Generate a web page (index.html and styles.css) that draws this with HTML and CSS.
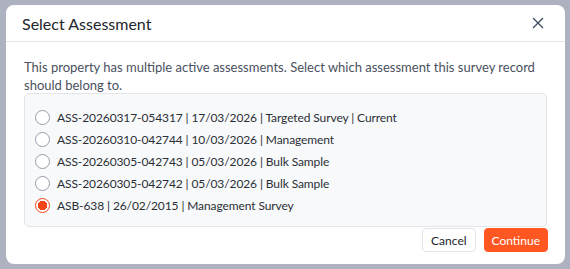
FILE: index.html
```html
<!DOCTYPE html>
<html lang="en">
<head>
    <meta charset="UTF-8">
    <meta name="viewport" content="width=device-width, initial-scale=1.0">
    <title>Select Assessment</title>
    <link rel="stylesheet" href="styles.css">
</head>
<body>
    <div class="dialog">
        <div class="dialog-header">
            <h2 class="dialog-title">Select Assessment</h2>
            <button class="close-btn" aria-label="Close">
                <svg width="12" height="12" viewBox="0 0 12 12">
                    <path d="M1 1 L11 11 M11 1 L1 11" stroke="#3b4a5c" stroke-width="1.3" fill="none"/>
                </svg>
            </button>
        </div>

        <div class="dialog-body">
            <p class="intro">This property has multiple active assessments. Select which assessment this survey record should belong to.</p>

            <div class="options">
                <label class="option">
                    <input type="radio" name="assessment">
                    <span>ASS-20260317-054317 | 17/03/2026 | Targeted Survey | Current</span>
                </label>
                <label class="option">
                    <input type="radio" name="assessment">
                    <span>ASS-20260310-042744 | 10/03/2026 | Management</span>
                </label>
                <label class="option">
                    <input type="radio" name="assessment">
                    <span>ASS-20260305-042743 | 05/03/2026 | Bulk Sample</span>
                </label>
                <label class="option">
                    <input type="radio" name="assessment">
                    <span>ASS-20260305-042742 | 05/03/2026 | Bulk Sample</span>
                </label>
                <label class="option">
                    <input type="radio" name="assessment" checked>
                    <span>ASB-638 | 26/02/2015 | Management Survey</span>
                </label>
            </div>
        </div>

        <div class="dialog-footer">
            <button class="btn btn-cancel">Cancel</button>
            <button class="btn btn-continue">Continue</button>
        </div>
    </div>
</body>
</html>
```

FILE: styles.css
```css
body {
    margin: 0;
    background-color: #aeb1c0;
    font-family: "Segoe UI", Lato, sans-serif;
    color: #2b2f36;
    padding: 5px 5px 5px 6px;
}

.dialog {
    background-color: white;
    border-radius: 8px;
    width: 559px;
    height: 259px;
    box-sizing: border-box;
    display: flex;
    flex-direction: column;
}

.dialog-header {
    display: flex;
    align-items: center;
    justify-content: space-between;
    height: 36px;
    padding: 0 21px 0 16px;
    border-bottom: 1px solid #e2e4ea;
}

.dialog-title {
    margin: 0;
    font-size: 16px;
    font-weight: 400;
    color: #22262c;
}

.close-btn {
    background: none;
    border: none;
    padding: 0;
    display: flex;
    cursor: pointer;
}

.dialog-body {
    padding: 16px 18px 0 18px;
}

.intro {
    margin: 0 0 -1px 0;
    font-size: 13px;
    line-height: 18px;
    color: #4a5160;
}

.options {
    background-color: #f8f9fb;
    border: 1px solid #e3e5ea;
    border-radius: 5px;
    padding: 12px 10px 10px 10px;
    height: 134px;
    box-sizing: border-box;
}

.option {
    display: flex;
    align-items: center;
    gap: 7px;
    height: 22px;
    font-size: 12px;
    letter-spacing: -0.1px;
    color: #2b2f36;
    cursor: pointer;
}

.option input {
    appearance: none;
    width: 15px;
    height: 15px;
    margin: 0;
    border: 1px solid #979dab;
    border-radius: 50%;
    background-color: white;
    cursor: pointer;
}

.option input:checked {
    border-color: #f2461a;
    background: radial-gradient(circle, #f2461a 0 4.5px, white 5px);
}

.dialog-footer {
    display: flex;
    justify-content: flex-end;
    gap: 8px;
    padding: 1px 17px 0 18px;
}

.btn {
    height: 24px;
    padding: 0 8px;
    font-family: inherit;
    font-size: 12px;
    border-radius: 4px;
    cursor: pointer;
}

.btn-cancel {
    background-color: white;
    border: 1px solid #e1e3e8;
    color: #22262c;
}

.btn-continue {
    padding: 0 7px;
    background-color: #fe5722;
    border: 1px solid #fe5722;
    color: white;
}
```
